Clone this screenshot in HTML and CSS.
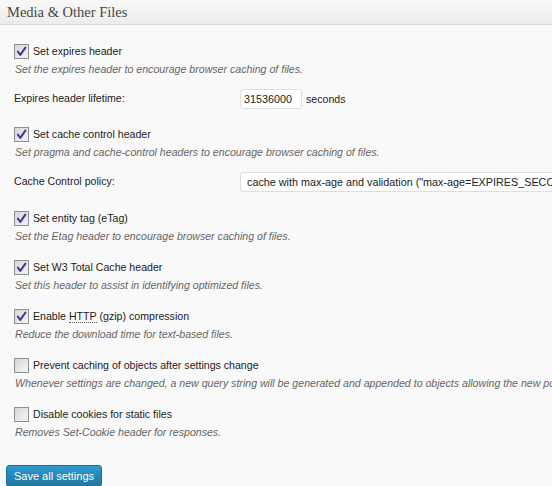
FILE: index.html
```html
<!DOCTYPE html>
<html>
<head>
<meta charset="utf-8">
<link rel="stylesheet" href="styles.css">
</head>
<body>
<div class="box">
  <h3 class="hd">Media &amp; Other Files</h3>
  <div class="inside">
    <div class="opt first">
      <label class="cbrow"><span class="cb on"><svg viewBox="0 0 15 15"><path d="M3.3 7.6 L6.1 11.4 L12 3" /></svg></span>Set expires header</label>
      <p class="desc">Set the expires header to encourage browser caching of files.</p>
    </div>
    <div class="field f-life">
      <span class="flabel">Expires header lifetime:</span>
      <span class="input num">31536000</span>
      <span class="unit">seconds</span>
    </div>
    <div class="opt after-field">
      <label class="cbrow"><span class="cb on"><svg viewBox="0 0 15 15"><path d="M3.3 7.6 L6.1 11.4 L12 3" /></svg></span>Set cache control header</label>
      <p class="desc">Set pragma and cache-control headers to encourage browser caching of files.</p>
    </div>
    <div class="field f-policy">
      <span class="flabel">Cache Control policy:</span>
      <span class="input sel">cache with max-age and validation ("max-age=EXPIRES_SECONDS, public, must-revalidate")</span>
    </div>
    <div class="opt after-select">
      <label class="cbrow"><span class="cb on"><svg viewBox="0 0 15 15"><path d="M3.3 7.6 L6.1 11.4 L12 3" /></svg></span>Set entity tag (eTag)</label>
      <p class="desc">Set the Etag header to encourage browser caching of files.</p>
    </div>
    <div class="opt">
      <label class="cbrow"><span class="cb on"><svg viewBox="0 0 15 15"><path d="M3.3 7.6 L6.1 11.4 L12 3" /></svg></span>Set W3 Total Cache header</label>
      <p class="desc">Set this header to assist in identifying optimized files.</p>
    </div>
    <div class="opt">
      <label class="cbrow"><span class="cb on"><svg viewBox="0 0 15 15"><path d="M3.3 7.6 L6.1 11.4 L12 3" /></svg></span>Enable&nbsp;<abbr class="ab">HTTP</abbr>&nbsp;(gzip) compression</label>
      <p class="desc">Reduce the download time for text-based files.</p>
    </div>
    <div class="opt">
      <label class="cbrow"><span class="cb"></span>Prevent caching of objects after settings change</label>
      <p class="desc">Whenever settings are changed, a new query string will be generated and appended to objects allowing the new policy to be applied.</p>
    </div>
    <div class="opt">
      <label class="cbrow"><span class="cb"></span>Disable cookies for static files</label>
      <p class="desc">Removes Set-Cookie header for responses.</p>
    </div>
    <div class="actions">
      <button class="btn">Save all settings</button>
    </div>
  </div>
</div>
</body>
</html>
```

FILE: styles.css
```css
html, body {
  margin: 0;
  padding: 0;
  background: #f9f9f9;
  overflow: hidden;
}
body {
  width: 552px;
  height: 486px;
  font-family: "Liberation Sans", Arial, sans-serif;
  font-size: 10.6px;
  color: #333;
}
.box {
  width: 552px;
  overflow: hidden;
}
.hd {
  margin: 0;
  height: 24px;
  line-height: 24px;
  padding-left: 7px;
  font-family: "Liberation Serif", "DejaVu Serif", serif;
  font-weight: normal;
  font-size: 14.5px;
  color: #464646;
  background: linear-gradient(to bottom, #f9f9f9, #ececec);
  border-bottom: 1px solid #dcdcdc;
}
.inside {
  padding-left: 14px;
  display: flex;
  flex-direction: column;
}
.opt {
  margin-top: 16px;
  display: flex;
  flex-direction: column;
}
.opt.first { margin-top: 19px; }
.opt.after-field { margin-top: 18px; }
.opt.after-select { margin-top: 19px; }
.cbrow {
  display: flex;
  align-items: center;
  height: 15px;
  line-height: 15px;
  white-space: nowrap;
  color: #222;
}
.cb {
  width: 13px;
  height: 13px;
  border: 1px solid #8e8f8f;
  background: linear-gradient(135deg, #d6d6d6, #f5f5f5);
  margin-right: 4px;
  flex: none;
  box-sizing: content-box;
  display: flex;
}
.cb svg {
  width: 13px;
  height: 13px;
}
.cb path {
  fill: none;
  stroke: #3b3a98;
  stroke-width: 2.3;
  stroke-linecap: round;
  stroke-linejoin: round;
}
.ab {
  text-decoration: none;
  border-bottom: 1px dotted #555;
  line-height: 12px;
}
.desc {
  margin: 3px 0 0 1px;
  line-height: 15px;
  font-style: italic;
  color: #666;
  white-space: nowrap;
  overflow: hidden;
  width: 537px;
}
.field {
  display: flex;
  align-items: center;
  height: 20px;
  white-space: nowrap;
}
.f-life { margin-top: 12px; }
.f-policy { margin-top: 12px; }
.flabel {
  width: 226px;
  flex: none;
  color: #222;
  position: relative;
  top: -1px;
}
.input {
  box-sizing: border-box;
  height: 20px;
  line-height: 18px;
  border: 1px solid #dfdfdf;
  border-radius: 3px;
  background: #fff;
  color: #222;
  font-size: 10.8px;
  flex: none;
}
.num {
  width: 62px;
  padding-left: 3px;
}
.unit {
  margin-left: 4px;
  color: #222;
}
.sel {
  width: 312px;
  padding-left: 6px;
  overflow: hidden;
  border-right: none;
  border-radius: 3px 0 0 3px;
}
.actions {
  margin-top: 25px;
  margin-left: -8px;
}
.btn {
  height: 22px;
  width: 96px;
  padding: 0;
  border: 1px solid #1d6e95;
  border-radius: 3px;
  background: linear-gradient(to bottom, #2e9ad0, #21759b);
  color: #fff;
  font-family: "Liberation Sans", Arial, sans-serif;
  font-size: 11px;
  line-height: 20px;
  text-align: center;
}
```
